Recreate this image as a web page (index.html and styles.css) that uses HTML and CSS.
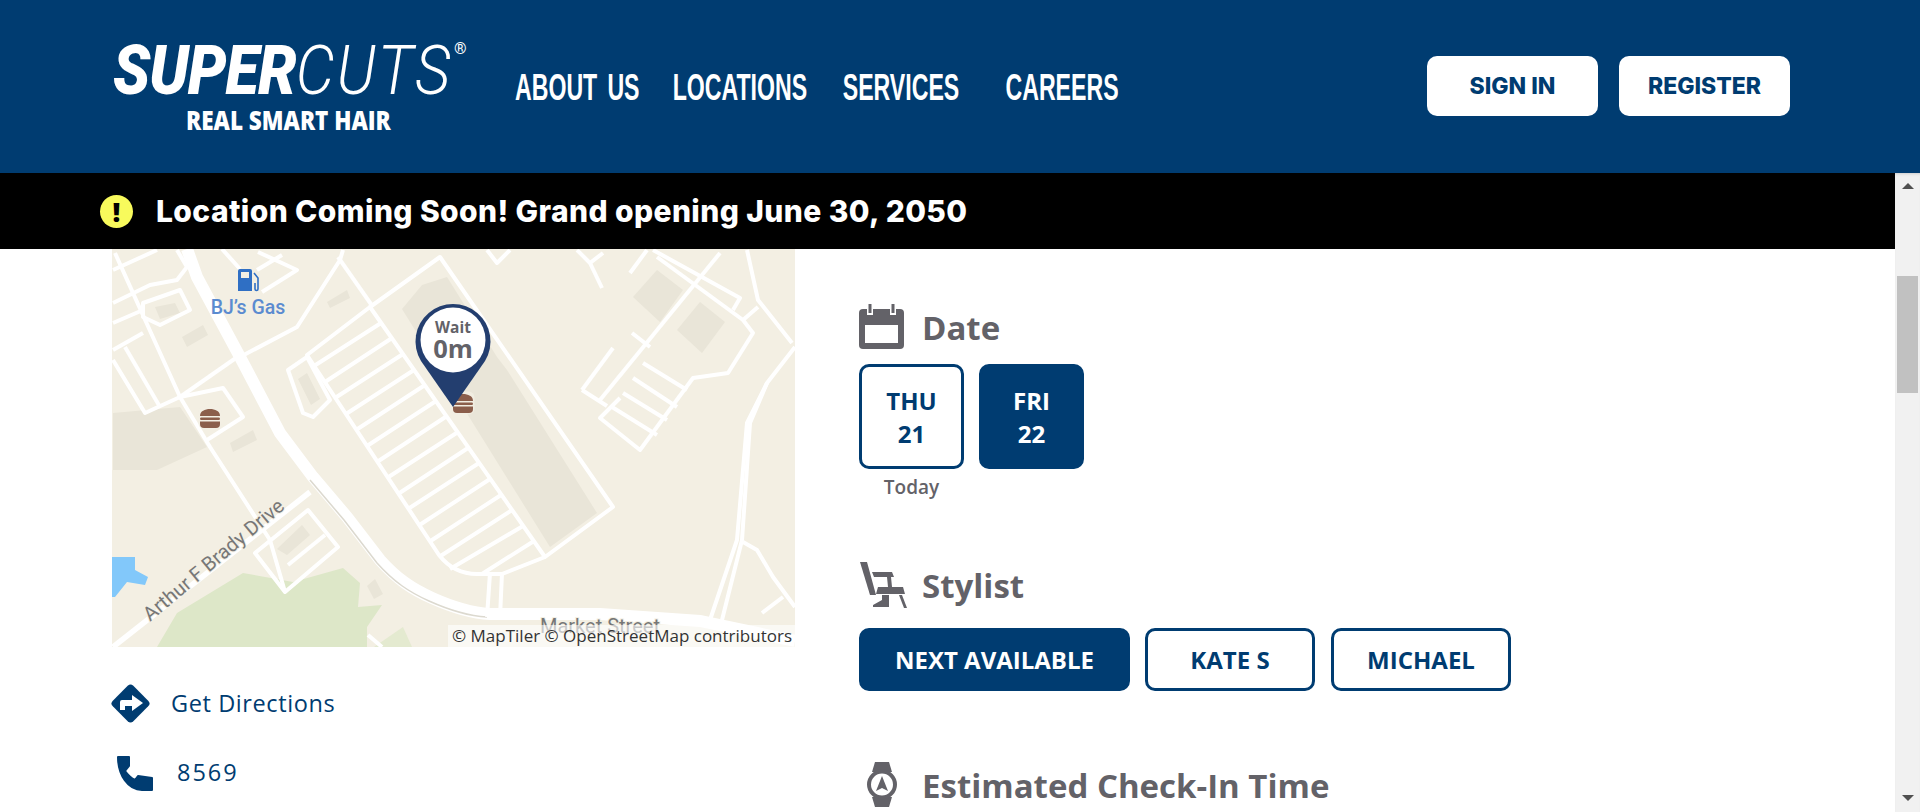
FILE: index.html
```html
<!DOCTYPE html>
<html lang="en">
<head>
  <meta charset="UTF-8">
  <title>Supercuts Check-In</title>
  <link rel="stylesheet" href="styles.css">
</head>
<body>

<!-- Header -->
<header class="site-header">
  <a class="logo" href="#">
    <span class="logo-word"><b>SUPER</b><i>CUTS</i></span>
    <span class="logo-reg">&reg;</span>
    <span class="logo-tag">REAL SMART HAIR</span>
  </a>
  <nav class="main-nav">
    <a href="#">ABOUT US</a>
    <a href="#">LOCATIONS</a>
    <a href="#">SERVICES</a>
    <a href="#">CAREERS</a>
  </nav>
  <div class="account">
    <a class="account-btn" href="#">SIGN IN</a>
    <a class="account-btn" href="#">REGISTER</a>
  </div>
</header>

<div class="viewport">
  <div class="content">

    <!-- Alert -->
    <div class="alert">
      <span class="alert-icon">!</span>
      <span>Location Coming Soon! Grand opening June 30, 2050</span>
    </div>

    <main class="columns">

      <!-- Map and contact -->
      <section class="salon">
        <div class="map">
          <svg viewBox="0 0 683 398" width="683" height="398">
            <rect width="683" height="398" fill="#f3efe3"/>
            <!-- land and water -->
            <path d="M45 398 65 364 131 324 181 333 231 319 248 334 246 358 270 356 255 378 255 398Z" fill="#dde7c8"/>
            <path d="M262 398 291 378 300 398Z" fill="#e4ead0"/>
            <path d="M0 308H23V321L36 328 33 336 15 333 3 348H0Z" fill="#82c8fa"/>
            <!-- buildings -->
            <g fill="#e9e5d8">
              <path d="M290 60 310 36 335 28 385 108 395 121 485 264 438 298Z"/>
              <path d="M1 164 68 158 95 198 45 221 1 221Z"/>
              <path d="M43 58 63 54 68 64 48 70Z"/>
              <path d="M70 88 91 76 96 86 75 98Z"/>
              <path d="M215 53 235 41 238 49 218 59Z"/>
              <path d="M118 194 141 181 145 191 121 203Z"/>
              <path d="M186 130 195 124 208 150 199 156Z"/>
              <path d="M521 48 545 21 571 41 548 73Z"/>
              <path d="M565 81 588 53 613 73 590 104Z"/>
              <path d="M165 300 190 276 198 286 175 306Z"/>
              <path d="M255 337 263 330 271 345 262 350Z"/>
            </g>
            <!-- main road -->
            <path d="M75 0 85 28 128 108 168 184 201 228 235 268 268 311C285 330 300 340 320 349 340 358 360 364 378 365H488L588 372 683 392" fill="none" stroke="#fff" stroke-width="12"/>
            <path d="M201 228 235 268 268 311C285 330 300 340 320 349 340 358 360 364 378 365" transform="translate(-3 3)" fill="none" stroke="#dcd9cf" stroke-width="1.500"/>
            <!-- streets -->
            <g fill="none" stroke="#fff" stroke-width="4" stroke-linejoin="round">
              <path d="M1 398 198 243" stroke-width="5.500"/>
              <path d="M128 108 185 78 228 11 231 1"/>
              <path d="M131 104 68 148"/>
              <path d="M226 8 261 58"/>
              <path d="M3 4 30 64 68 148 98 198 158 291 173 343"/>
              <path d="M143 304 173 343 226 298 196 261Z"/>
              <path d="M176 316 213 286"/>
              <path d="M1 21 45 1"/>
              <path d="M31 54 68 41 78 61 48 76 31 68Z"/>
              <path d="M1 54 38 36 65 31 75 18 65 1"/>
              <path d="M1 74 31 61"/>
              <path d="M1 101 31 84"/>
              <path d="M13 98 48 158"/>
              <path d="M1 111 33 164 68 148"/>
              <path d="M68 148 111 139 131 168 95 191"/>
              <path d="M110 0 128 20"/>
              <path d="M146 3 185 21 150 43"/>
              <path d="M170 6 145 21"/>
              <path d="M176 121 195 108 218 151 201 168 191 164Z"/>
              <!-- big lot -->
              <path d="M328 8 501 258 433 308 258 58Z"/>
              <path d="M258 58 195 106 327 306C338 320 350 325 365 325H390L433 308"/>
              <path d="M269 74 202 117M280 89 213 133M291 105 223 149M302 121 234 165M313 136 244 181M324 152 255 197M335 167 265 213M346 183 275 229M356 199 286 245M367 214 296 260M378 230 306 277M389 246 317 293M400 261 327 308M411 277 338 320M422 292 370 325"/>
              <path d="M375 1 385 14 398 1"/>
              <path d="M465 1 478 14 490 39"/>
              <path d="M478 14 491 4"/>
              <!-- right lot -->
              <path d="M518 24 535 1"/>
              <path d="M541 1 628 49 621 61"/>
              <path d="M608 4 488 151"/>
              <path d="M470 141 501 99"/>
              <path d="M470 141 495 157"/>
              <path d="M520 84 538 98"/>
              <path d="M545 8 631 71 641 84 616 124 581 129 528 201 488 169 508 149"/>
              <path d="M531 114 575 141M521 129 565 158M511 144 555 171M500 158 545 186"/>
              <path d="M635 1 646 51 680 94"/>
              <path d="M646 58 631 71"/>
              <path d="M683 98 655 134 635 174 625 291 598 371"/>
              <path d="M655 134 638 174 630 291 610 371"/>
              <path d="M631 293 645 301 661 328 683 358"/>
              <path d="M650 364 671 348"/>
              <path d="M378 324 375 368M390 324 388 368"/>
              <path d="M270 398 256 386"/>
            </g>
            <!-- labels -->
            <g class="map-label">
              <text transform="translate(38 373) rotate(-40)">Arthur F Brady Drive</text>
              <text x="428" y="384">Market Street</text>
            </g>
            <!-- gas station -->
            <g fill="#2f6fc4">
              <path d="M126 22a2 2 0 0 1 2-2h10a2 2 0 0 1 2 2V42h-14Z"/>
              <path d="M142 24l4 5V40a1.500 1.500 0 0 1-3 0V34" fill="none" stroke="#2f6fc4" stroke-width="1.600"/>
            </g>
            <rect x="129" y="23" width="8" height="6" fill="#f3efe3"/>
            <text class="gas-label" x="136" y="65">BJ&rsquo;s Gas</text>
            <!-- burgers -->
            <g id="burger" transform="translate(88 159)">
              <rect x="-1.500" y="-1.500" width="23" height="23" rx="6" fill="#f3efe3" opacity=".8"/>
              <path d="M0 8C0 3 5 1 10 1s10 2 10 7Z" fill="#8b5e4b"/>
              <rect y="9.500" width="20" height="2.500" rx="1.200" fill="#8b5e4b"/>
              <path d="M0 13.500H20V16a4 4 0 0 1-4 4H4a4 4 0 0 1-4-4Z" fill="#8b5e4b"/>
            </g>
            <use href="#burger" x="253" y="-15"/>
            <!-- pin -->
            <path d="M341 158 309 112A37.500 37.500 0 1 1 373 112Z" fill="#233e6f"/>
            <circle cx="341" cy="91" r="32.500" fill="#fff"/>
            <text class="pin-small" x="341" y="84">Wait</text>
            <text class="pin-big" x="341" y="109">0m</text>
          </svg>
          <span class="attribution">&copy; MapTiler &copy; OpenStreetMap contributors</span>
        </div>

        <a class="contact-row" href="#">
          <svg class="directions-icon" viewBox="0 0 41 41" width="41" height="41">
            <rect x="6" y="6" width="29" height="29" rx="4" transform="rotate(45 20.500 20.500)" fill="#003c71"/>
            <path d="M10 27V19a2 2 0 0 1 2-2H22V12L33 20 22 28V23H15v4Z" fill="#fff"/>
          </svg>
          <span>Get Directions</span>
        </a>
        <a class="contact-row phone-row" href="#">
          <svg class="phone-icon" viewBox="0 0 36 36" width="36" height="36">
            <path d="M1 2H12V11L8 16C11 20 14 23 18 25L21 21 35 23V35H25C11 35 1 20 1 2Z" fill="#003c71" stroke="#003c71" stroke-width="2" stroke-linejoin="round"/>
          </svg>
          <span>8569</span>
        </a>
      </section>

      <!-- Check-in options -->
      <section class="checkin">
        <h2 class="option-title">
          <span class="option-icon">
            <svg viewBox="0 0 45 45" width="45" height="45">
              <rect y="5" width="45" height="40" rx="4" fill="#636268"/>
              <rect x="6" y="21" width="33" height="18" fill="#fff"/>
              <rect x="8" y="0" width="6" height="11" fill="#fff"/>
              <rect x="31" y="0" width="6" height="11" fill="#fff"/>
              <rect x="9.500" y="0" width="3" height="9" fill="#636268"/>
              <rect x="32.500" y="0" width="3" height="9" fill="#636268"/>
            </svg>
          </span>
          Date
        </h2>
        <div class="dates">
          <div class="date-col">
            <button class="choice date">THU<br>21</button>
            <span class="today">Today</span>
          </div>
          <div class="date-col">
            <button class="choice date selected">FRI<br>22</button>
          </div>
        </div>

        <h2 class="option-title stylist-title">
          <span class="option-icon">
            <svg viewBox="0 0 47 46" width="47" height="46">
              <path d="M0 0H7L16 33H10Z" fill="#636268"/>
              <path d="M18 25H43L45 32H16Z" fill="#636268"/>
              <path d="M12 10H32L34 15H31L32 25H28L27 15H14Z" fill="#636268"/>
              <path d="M22 33H29V45H13V43L22 38Z" fill="#636268"/>
              <path d="M39 33H42L47 46H44Z" fill="#636268"/>
            </svg>
          </span>
          Stylist
        </h2>
        <div class="stylists">
          <button class="choice stylist selected next">NEXT AVAILABLE</button>
          <button class="choice stylist kate">KATE S</button>
          <button class="choice stylist michael">MICHAEL</button>
        </div>

        <h2 class="option-title time-title">
          <span class="option-icon watch">
            <svg viewBox="0 0 30 45" width="30" height="45">
              <path d="M8 0H22L25 10H5Z" fill="#636268"/>
              <path d="M5 35H25L22 45H8Z" fill="#636268"/>
              <circle cx="15" cy="22.500" r="13" fill="#fff" stroke="#636268" stroke-width="4"/>
              <path d="M15 14 21 29 15 26 9 29Z" fill="#636268"/>
            </svg>
          </span>
          Estimated Check-In Time
        </h2>
      </section>

    </main>
  </div>

  <!-- Scrollbar -->
  <div class="scrollbar">
    <span class="scroll-arrow"></span>
    <span class="scroll-thumb"></span>
    <span class="scroll-arrow down"></span>
  </div>
</div>

</body>
</html>
```

FILE: styles.css
```css
/* Page */
* { box-sizing: border-box; }
html, body { margin: 0; height: 812px; overflow: hidden; background: #fff; }
body { font-family: "Open Sans", sans-serif; color: #636268; }
a { color: inherit; text-decoration: none; }

/* Header */
.site-header { display: flex; align-items: center; height: 173px; padding: 0 130px 0 113px; background: #003c71; color: #fff; }
.logo { position: relative; display: block; width: 402px; height: 88px; flex: none; }
.logo-word { position: absolute; left: 0; top: -12px; font-family: Roboto, sans-serif; font-size: 68px; line-height: 80px; white-space: nowrap; transform: scaleX(.9); transform-origin: left top; }
.logo-word b { font-weight: 900; font-style: italic; letter-spacing: -1px; }
.logo-word i { font-weight: 300; font-style: italic; letter-spacing: 2.5px; }
.logo-reg { position: absolute; left: 341px; top: -2px; font: 400 16px/16px Roboto, sans-serif; }
.logo-tag { position: absolute; left: 73px; top: 64px; font: 800 26px/26px "Open Sans", sans-serif; white-space: nowrap; transform: scaleX(.865); transform-origin: left top; }

.main-nav { display: flex; flex: 1; min-width: 0; padding-top: 2px; font: 700 37px/44px "Liberation Sans", sans-serif; white-space: nowrap; transform: scaleX(.625); transform-origin: left center; }
.main-nav a { margin-right: 53px; }
.main-nav a:first-child { word-spacing: 6px; }
.main-nav a:nth-child(2) { margin-right: 57px; }
.main-nav a:nth-child(3) { margin-right: 74px; }

.account { display: flex; gap: 21px; margin-top: -1px; }
.account-btn { display: flex; align-items: center; justify-content: center; width: 171px; height: 60px; border-radius: 10px; background: #fff; color: #003c71; font: 800 23px/1 Inter, sans-serif; }

/* Below the header */
.viewport { display: flex; height: 639px; }
.content { flex: 1; overflow: hidden; }
.alert { display: flex; align-items: center; gap: 23px; height: 76px; padding-left: 100px; background: #000; color: #fff; font: 800 30px/1 Inter, sans-serif; letter-spacing: .4px; }
.alert-icon { display: flex; align-items: center; justify-content: center; width: 33px; height: 33px; border-radius: 50%; background: #f8fa5c; color: #000; font: 800 27px/1 "Open Sans", sans-serif; }

.columns { display: flex; gap: 64px; padding-left: 112px; }

/* Map */
.salon { width: 683px; flex: none; }
.map { position: relative; height: 398px; overflow: hidden; }
.map svg { display: block; }
.map-label text { font: 400 20px Roboto, sans-serif; fill: #777; stroke: #f3efe3; stroke-width: 2px; paint-order: stroke; }
.gas-label { font: 500 19.5px Roboto, sans-serif; fill: #5b8bd0; text-anchor: middle; }
.pin-small { font: 700 15.5px "Open Sans", sans-serif; fill: #636268; text-anchor: middle; }
.pin-big { font: 700 25.5px "Open Sans", sans-serif; fill: #636268; text-anchor: middle; }
.attribution { position: absolute; right: 0; bottom: 0; padding: 1px 3px 2px 4px; background: rgba(255, 255, 255, .6); color: #333; font-size: 17px; line-height: 19px; white-space: nowrap; }

.contact-row { display: flex; align-items: center; gap: 20px; margin: 36px 0 0 -2px; color: #003c71; font-size: 23.5px; letter-spacing: .6px; line-height: 41px; }
.phone-row { gap: 24px; margin: 28px 0 0 5px; letter-spacing: 2px; }
.contact-row svg { display: block; flex: none; }

/* Check-in options */
.checkin { flex: 1; padding-top: 55px; }
.option-title { display: flex; align-items: center; height: 45px; margin: 0; padding-top: 2px; font-size: 33px; font-weight: 700; line-height: 43px; }
.option-icon { display: block; width: 63px; margin-top: -2px; flex: none; }
.option-icon svg { display: block; }
.watch { padding-left: 8px; }
.stylist-title { margin-top: 63px; }
.stylist-title .option-icon { padding-left: 1px; }
.time-title { margin-top: 71px; }

.dates { display: flex; gap: 15px; margin-top: 15px; }
.date-col { display: flex; flex-direction: column; align-items: center; }
.today { margin-top: 6px; font-size: 19px; font-weight: 600; line-height: 24px; }

.choice { border: 3px solid #003c71; border-radius: 10px; background: #fff; color: #003c71; font: 700 24px/33px "Open Sans", sans-serif; padding: 0; }
.choice.selected { background: #003c71; color: #fff; }
.date { width: 105px; height: 105px; }

.stylists { display: flex; gap: 15px; margin-top: 21px; }
.stylist { height: 63px; }
.next { width: 271px; }
.kate { width: 170px; }
.michael { width: 180px; margin-left: 1px; }

/* Scrollbar */
.scrollbar { position: relative; width: 25px; flex: none; background: #f1f1f1; box-shadow: inset 0 3px 3px -2px #ccc; }
.scroll-arrow { position: absolute; left: 7px; top: 10px; border: 6px solid transparent; border-top: 0; border-bottom: 6px solid #505050; }
.scroll-arrow.down { top: 622px; border: 6px solid transparent; border-bottom: 0; border-top: 6px solid #505050; }
.scroll-thumb { position: absolute; left: 2px; top: 103px; width: 21px; height: 117px; background: #c1c1c1; }
```
